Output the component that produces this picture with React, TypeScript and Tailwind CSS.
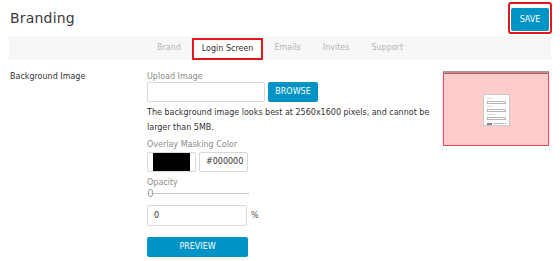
import { useState } from "react"

const tabs = ["Brand", "Login Screen", "Emails", "Invites", "Support"]

const PreviewThumb = () => {
  return (
    <div className="w-[106px] flex flex-col">
      <div className="h-[2px] bg-[#9b9b9b]" />
      <div className="h-[73px] bg-[#ffcccc] border border-[#e8474c] flex items-center justify-center">
        <div className="w-[27px] h-[32px] bg-white border border-[#c8c8c8] flex flex-col gap-[2px] px-[3px] pt-[3px]">
          <div className="h-[1px] w-[6px] bg-[#d5d5d5]" />
          <div className="h-[3px] border border-[#b5b5b5]" />
          <div className="h-[1px] w-[6px] bg-[#d5d5d5]" />
          <div className="h-[3px] border border-[#b5b5b5]" />
          <div className="h-[1px] w-[8px] bg-[#d5d5d5]" />
          <div className="h-[3px] border border-[#b5b5b5]" />
          <div className="flex items-center gap-[1px] mt-[1px]">
            <div className="h-[2px] w-[5px] bg-[#888]" />
            <div className="h-[1px] flex-1 bg-[#bbb]" />
            <div className="h-[1px] w-[1px] bg-[#888]" />
          </div>
        </div>
      </div>
    </div>
  )
}

const App = () => {
  const [active] = useState("Login Screen")
  const [opacity, setOpacity] = useState("0")

  return (
    <div className="w-[560px] h-[261px] bg-white text-[#333] overflow-hidden" style={{ fontFamily: "'DejaVu Sans', sans-serif" }}>
      <div className="flex items-center justify-between pl-[10px] pr-[8px] pt-[3px] h-[33px]">
        <h1 className="text-[14px] text-[#3a3a3a] tracking-[0.2px]">Branding</h1>
        <div className="border-2 border-[#e2161b] rounded-[3px] p-[1px]">
          <button className="bg-[#0094c6] text-white text-[8px] w-[38px] h-[23px] rounded-[2px]">SAVE</button>
        </div>
      </div>

      <div className="mx-[9px] mt-[3px] h-[24px] bg-[#f7f7f7] flex items-center justify-center">
        {tabs.map((t) =>
          t === active ? (
            <div key={t} className="h-[22px] self-end flex items-center px-[8px] bg-white border-2 border-[#e2161b] text-[8px] text-[#333]">
              {t}
            </div>
          ) : (
            <div key={t} className="text-[8px] text-[#b5b5b5] px-[11px]">
              {t}
            </div>
          )
        )}
      </div>

      <div className="flex mt-[6px]">
        <div className="w-[147px] shrink-0 pl-[10px] pt-[5px] text-[8px] text-[#333]">Background Image</div>

        <div className="w-[296px] shrink-0 pt-[6px] flex flex-col">
          <label className="text-[8px] text-[#8b8b8b] leading-[10px]">Upload Image</label>
          <div className="flex gap-[3px]">
            <div className="w-[118px] h-[20px] border border-[#d9d9d9] rounded-[2px] bg-white" />
            <button className="w-[50px] h-[20px] bg-[#0094c6] text-white text-[8px] rounded-[2px]">BROWSE</button>
          </div>
          <p className="w-[300px] text-[8px] leading-[15px] mt-[3px] text-[#333]">
            The background image looks best at 2560x1600 pixels, and cannot be larger than 5MB.
          </p>

          <label className="text-[8px] text-[#8b8b8b] leading-[10px] mt-[5px]">Overlay Masking Color</label>
          <div className="flex gap-[3px] mt-[2px]">
            <div className="w-[49px] h-[20px] border border-[#d9d9d9] rounded-[2px] bg-white flex items-center px-[5px]">
              <div className="w-[37px] h-[18px] bg-black" />
            </div>
            <div className="w-[49px] h-[20px] border border-[#d9d9d9] rounded-[2px] bg-white flex items-center pl-[6px] text-[8px] text-[#333]">
              #000000
            </div>
          </div>

          <label className="text-[8px] text-[#8b8b8b] leading-[10px] mt-[6px]">Opacity</label>
          <div className="relative w-[102px] h-[10px] flex items-center">
            <div className="h-[1px] w-full bg-[#c4c4c4]" />
            <div className="absolute left-[1px] top-[1px] w-[5px] h-[8px] rounded-[2px] border border-[#aaa] bg-[#f4f4f4]" />
          </div>

          <div className="flex items-center gap-[4px] mt-[7px]">
            <input
              value={opacity}
              onChange={(e) => setOpacity(e.target.value)}
              className="w-[100px] h-[21px] border border-[#d9d9d9] rounded-[2px] pl-[6px] text-[8px] text-[#333] outline-none"
            />
            <span className="text-[8px] text-[#555]">%</span>
          </div>

          <button className="w-[101px] h-[20px] mt-[11px] bg-[#0094c6] text-white text-[8px] rounded-[2px]">PREVIEW</button>
        </div>

        <div className="pt-[5px]">
          <PreviewThumb />
        </div>
      </div>
    </div>
  )
}

export default App
